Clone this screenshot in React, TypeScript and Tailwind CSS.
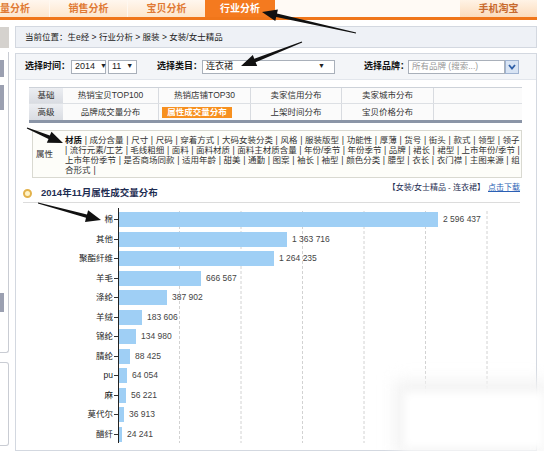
import React from "react";

const bars: [string, number][] = [
  ["棉", 2596437],
  ["其他", 1363716],
  ["聚酯纤维", 1264235],
  ["羊毛", 666567],
  ["涤纶", 387902],
  ["羊绒", 183606],
  ["锦纶", 134980],
  ["腈纶", 88425],
  ["pu", 64054],
  ["麻", 56221],
  ["莫代尔", 36913],
  ["醋纤", 24241],
];

const fmt = (n: number) => n.toString().replace(/\B(?=(\d{3})+(?!\d))/g, " ");
const scale = 319 / 2596437;

const attrLines = [
  "材质 | 成分含量 | 尺寸 | 尺码 | 穿着方式 | 大码女装分类 | 风格 | 服装版型 | 功能性 | 厚薄 | 货号 | 街头 | 款式 | 领型 | 领子",
  "| 流行元素/工艺 | 毛线粗细 | 面料 | 面料材质 | 面料主材质含量 | 年份/季节 | 年份季节 | 品牌 | 裙长 | 裙型 | 上市年份/季节 |",
  "上市年份季节 | 是否商场同款 | 适用年龄 | 甜美 | 通勤 | 图案 | 袖长 | 袖型 | 颜色分类 | 腰型 | 衣长 | 衣门襟 | 主图来源 | 组",
];

function Arrow({ x1, y1, x2, y2 }: { x1: number; y1: number; x2: number; y2: number }) {
  const dx = x2 - x1;
  const dy = y2 - y1;
  const len = Math.hypot(dx, dy);
  const ux = dx / len;
  const uy = dy / len;
  const px = -uy;
  const py = ux;
  const hl = 15;
  const hw = 6;
  const s0 = 0.5;
  const s1 = 1.8;
  const bx = x2 - ux * hl;
  const by = y2 - uy * hl;
  const pts = [
    [x1 + px * s0, y1 + py * s0],
    [bx + px * s1, by + py * s1],
    [bx + px * hw, by + py * hw],
    [x2, y2],
    [bx - px * hw, by - py * hw],
    [bx - px * s1, by - py * s1],
    [x1 - px * s0, y1 - py * s0],
  ]
    .map((p) => p.map((v) => v.toFixed(1)).join(","))
    .join(" ");
  return <polygon points={pts} fill="#111" />;
}

function Select({ w, text, arrowRight = false }: { w: string; text: string; arrowRight?: boolean }) {
  return (
    <div className={`flex h-[14px] items-center border border-[#a9b0ba] bg-white px-[3px] text-[9px] text-[#222] ${w}`}>
      <span>{text}</span>
      <span className={`text-[7px] ${arrowRight ? "ml-auto mr-[6px]" : "ml-[5px]"}`}>▼</span>
    </div>
  );
}

export default function App() {
  return (
    <div className="relative h-[451px] w-[544px] overflow-hidden bg-white font-['Liberation_Sans','Noto_Sans_CJK_SC',sans-serif] text-[#333]">
      {/* top nav */}
      <div className="flex h-[17px] w-[537px] bg-[#fffaf5] text-[10px] font-bold whitespace-nowrap">
        <div className="flex w-[49px] items-center justify-end overflow-hidden bg-gradient-to-b from-[#fff7ef] to-[#fde6cd] pr-[19px] text-[#e07a34]">
          量分析
        </div>
        <div className="flex w-[78px] items-center justify-center border-l border-[#fff8f0] bg-gradient-to-b from-[#fff7ef] to-[#fde6cd] text-[#e07a34]">
          销售分析
        </div>
        <div className="flex w-[78px] items-center justify-center border-l border-[#fff8f0] bg-gradient-to-b from-[#fff7ef] to-[#fde6cd] text-[#e07a34]">
          宝贝分析
        </div>
        <div className="flex w-[70px] items-center justify-center bg-[#f47a1f] text-white">行业分析</div>
        <div className="flex-1" />
        <div className="flex w-[77px] items-center justify-center bg-gradient-to-b from-[#fff3e6] to-[#fbdcbc] text-[#c8692c]">
          手机淘宝
        </div>
      </div>
      <div className="h-[3px] w-[537px] bg-[#f0761a]" />

      {/* body */}
      <div className="flex h-[431px]">
        {/* left sidebar (cut off) */}
        <div className="flex w-[9px] flex-col">
          <div className="mt-[7px] h-[21px] bg-[#d5d2ce]" />
          <div className="mt-[4px] flex h-[301px] flex-col rounded-br-[3px] border-r border-b border-[#c9ccd3]">
            <div className="mt-[8px] h-[17px] w-[4px] bg-[#9ba0b1]" />
            <div className="mt-[8px] h-[25px] w-[4px] bg-[#9ba0b1]" />
            <div className="mt-[183px] h-[19px] w-[4px] bg-[#9ba0b1]" />
          </div>
          <div className="mt-[9px] h-[84px] rounded-r-[3px] border-y border-r border-[#c9ccd3]" />
        </div>

        {/* main column */}
        <div className="ml-[6px] flex w-[522px] flex-col">
          <div className="mt-[6px] flex h-[22px] items-center border border-[#d3d8e0] bg-[#eef1f6] pl-[9px] text-[8.5px] text-[#222]">
            当前位置：生e经 &gt; 行业分析 &gt; 服装 &gt; 女装/女士精品
          </div>

          <div className="mt-[5px] flex flex-1 flex-col border border-[#d3d8e0]">
            {/* selects */}
            <div className="flex h-[26px] items-center border-b border-[#e2e6ec] bg-[#f3f5f8] pl-[9px] whitespace-nowrap">
              <span className="w-[46px] text-[9px] font-bold text-[#111]">选择时间：</span>
              <Select w="w-[35px]" text="2014" />
              <div className="ml-[2px]">
                <Select w="w-[29px]" text="11" />
              </div>
              <span className="ml-[20px] w-[45px] text-[9px] font-bold text-[#111]">选择类目：</span>
              <Select w="w-[133px]" text="连衣裙" arrowRight />
              <span className="ml-[29px] w-[44px] text-[9px] font-bold text-[#111]">选择品牌：</span>
              <div className="flex h-[14px] w-[97px] items-center border border-[#a9b0ba] bg-white px-[3px] text-[8.5px] text-[#999]">
                所有品牌 (搜索...)
              </div>
              <div className="flex h-[14px] w-[14px] items-center justify-center border border-[#9fb3d1] bg-[#d8e4f4]">
                <svg width="8" height="6" viewBox="0 0 8 6">
                  <path d="M1 1 L4 4.5 L7 1" stroke="#2f5fa8" strokeWidth="1.8" fill="none" />
                </svg>
              </div>
            </div>

            {/* tab table */}
            <div className="ml-[13px] mt-[7px] w-[493px] border-t border-b-[3px] border-t-[#cdd2d9] border-b-[#8b95a7] text-[8.5px] text-[#333] whitespace-nowrap">
              <div className="flex h-[16px] border-b border-[#dde0e4]">
                <div className="flex w-[34px] items-center justify-center bg-gradient-to-b from-[#eceef2] to-[#d9dce2]">基础</div>
                <div className="flex w-[95px] items-center justify-center bg-[#fbfbfb]">热销宝贝TOP100</div>
                <div className="flex w-[92px] items-center justify-center border-l border-[#d8dbe0] bg-[#fbfbfb]">热销店铺TOP30</div>
                <div className="flex w-[91px] items-center justify-center border-l border-[#d8dbe0] bg-[#fbfbfb]">卖家信用分布</div>
                <div className="flex w-[92px] items-center justify-center border-l border-[#d8dbe0] bg-[#fbfbfb]">卖家城市分布</div>
                <div className="flex-1 border-l border-[#d8dbe0] bg-[#fbfbfb]" />
              </div>
              <div className="flex h-[16px]">
                <div className="flex w-[34px] items-center justify-center bg-gradient-to-b from-[#eceef2] to-[#d9dce2]">高级</div>
                <div className="flex w-[95px] items-center justify-center bg-[#fbfbfb]">品牌成交量分布</div>
                <div className="flex w-[92px] items-start border-l border-[#d8dbe0] bg-[#fbfbfb] pt-[3px] pl-[3px]">
                  <div className="flex h-[11px] w-[70px] items-center justify-center bg-[#f7901f] font-bold text-white">
                    属性成交量分布
                  </div>
                </div>
                <div className="flex w-[91px] items-center justify-center border-l border-[#d8dbe0] bg-[#fbfbfb]">上架时间分布</div>
                <div className="flex w-[92px] items-center justify-center border-l border-[#d8dbe0] bg-[#fbfbfb]">宝贝价格分布</div>
                <div className="flex-1 border-l border-[#d8dbe0] bg-[#fbfbfb]" />
              </div>
            </div>

            {/* attributes */}
            <div className="ml-[16px] mt-[7px] flex h-[48px] w-[490px] border border-[#d9d9d1] bg-[#fdfdf9] text-[8.5px] text-[#333] whitespace-nowrap">
              <div className="flex w-[32px] items-center pl-[3px]">属性</div>
              <div className="flex w-[455px] flex-col pt-[4px] leading-[10px]">
                {attrLines.map((line, i) => (
                  <div key={i} className="flex h-[10px] justify-between">
                    {line.split(" ").map((tok, j) => (
                      <span key={j} className={i === 0 && j === 0 ? "font-bold text-[#111]" : ""}>
                        {tok}
                      </span>
                    ))}
                  </div>
                ))}
                <div className="flex h-[10px] gap-[3px]">
                  <span>合形式</span>
                  <span>|</span>
                </div>
              </div>
            </div>

            {/* chart title */}
            <div className="ml-[7px] mt-[4px] flex h-[21px] w-[497px] items-start justify-between border-b border-[#dcdcdc] whitespace-nowrap">
              <div className="mt-[5px] flex h-[12px] items-center">
                <div className="h-[9px] w-[9px] rounded-full border-2 border-[#e3b24c] bg-[#fff4c8]" />
                <span className="ml-[9px] text-[9.5px] font-bold text-[#1e2d52]">2014年11月属性成交量分布</span>
              </div>
              <div className="mt-[1px] text-[8px] leading-[10px] text-[#1e2d52]">
                【女装/女士精品 - 连衣裙】
                <span className="ml-[3px] text-[#2b5fb4] underline">点击下载</span>
              </div>
            </div>

            {/* chart */}
            <div className="mt-[5px] flex text-[8.5px] whitespace-nowrap">
              <div className="flex w-[102px] flex-col gap-[4.5px] pt-[4px] text-[#222]">
                {bars.map(([name]) => (
                  <div key={name} className="flex h-[15px] items-center justify-end">
                    <span>{name}</span>
                    <div className="ml-[1px] h-px w-[4px] bg-[#333]" />
                  </div>
                ))}
              </div>
              <div className="relative flex w-[400px] flex-col gap-[4.5px] border-l border-[#222] pt-[4px] pb-[1px]">
                <svg className="absolute left-0 top-0 h-full w-[400px]" width="400" height="235">
                  {[1, 2, 3, 4, 5, 6].map((k) => (
                    <line
                      key={k}
                      x1={61.5 * k - 1}
                      x2={61.5 * k - 1}
                      y1={3}
                      y2={235}
                      stroke="#d2d2d2"
                      strokeWidth="1"
                      strokeDasharray="3 2"
                    />
                  ))}
                </svg>
                {bars.map(([name, v]) => (
                  <div key={name} className="relative flex h-[15px] items-center">
                    <div className="h-full bg-[#9fcff5]" style={{ width: `${Math.round(v * scale)}px` }} />
                    <span className="ml-[5px] text-[#444]">{fmt(v)}</span>
                  </div>
                ))}
              </div>
            </div>
          </div>
        </div>
      </div>

      {/* blurred watermark patch */}
      <div className="pointer-events-none absolute left-[394px] top-[380px] h-[74px] w-[154px] bg-[#f3f3f3] blur-[8px]" />
      <div className="pointer-events-none absolute left-[404px] top-[392px] h-[56px] w-[140px] bg-white blur-[4px]" />

      {/* annotation arrows */}
      <svg className="pointer-events-none absolute left-0 top-0" width="544" height="451">
        <Arrow x1={356} y1={33} x2={262} y2={12} />
        <Arrow x1={302} y1={42} x2={241} y2={66} />
        <Arrow x1={27} y1={128} x2={63} y2={143} />
        <Arrow x1={38} y1={203} x2={101} y2={220} />
      </svg>
    </div>
  );
}
